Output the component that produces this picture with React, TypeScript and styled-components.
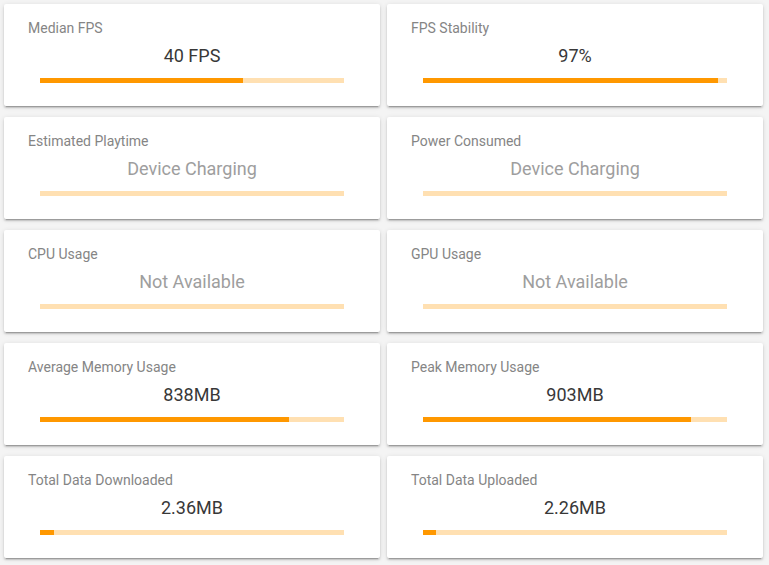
import React from 'react';
import styled, { createGlobalStyle } from 'styled-components';

const GlobalStyle = createGlobalStyle`
  body {
    margin: 0;
    background: #f4f4f4;
    font-family: Roboto, "Liberation Sans", sans-serif;
  }
`;

const Grid = styled.div`
  display: grid;
  grid-template-columns: 1fr 1fr;
  gap: 11px 7px;
  padding: 4px 6px 7px 4px;
`;

const Card = styled.div`
  height: 102px;
  box-sizing: border-box;
  background: #fff;
  border-radius: 2px;
  padding: 14px 24px 0 24px;
  box-shadow: 0 3px 1px -2px rgba(0, 0, 0, 0.2), 0 2px 2px 0 rgba(0, 0, 0, 0.14),
    0 1px 5px 0 rgba(0, 0, 0, 0.12);
`;

const Title = styled.div`
  font-size: 14px;
  line-height: 20px;
  color: #858585;
`;

const Body = styled.div`
  padding: 0 12px;
  margin-top: 6px;
`;

const Value = styled.div<{ $muted?: boolean }>`
  text-align: center;
  font-size: 18px;
  line-height: 24px;
  color: ${(p) => (p.$muted ? '#9e9e9e' : '#383838')};
`;

const Track = styled.div`
  margin-top: 10px;
  height: 5px;
  background: #ffe0b2;
  overflow: hidden;
`;

const Fill = styled.div`
  height: 100%;
  background: #ff9800;
`;

type Stat = { title: string; value: string; ratio?: number };

const stats: Stat[] = [
  { title: 'Median FPS', value: '40 FPS', ratio: 40 / 60 },
  { title: 'FPS Stability', value: '97%', ratio: 0.97 },
  { title: 'Estimated Playtime', value: 'Device Charging' },
  { title: 'Power Consumed', value: 'Device Charging' },
  { title: 'CPU Usage', value: 'Not Available' },
  { title: 'GPU Usage', value: 'Not Available' },
  { title: 'Average Memory Usage', value: '838MB', ratio: 838 / 1024 },
  { title: 'Peak Memory Usage', value: '903MB', ratio: 903 / 1024 },
  { title: 'Total Data Downloaded', value: '2.36MB', ratio: 0.046 },
  { title: 'Total Data Uploaded', value: '2.26MB', ratio: 0.043 },
];

function StatCard({ title, value, ratio }: Stat) {
  const muted = ratio === undefined;
  return (
    <Card>
      <Title>{title}</Title>
      <Body>
        <Value $muted={muted}>{value}</Value>
        <Track>
          {!muted && <Fill style={{ width: `${ratio! * 100}%` }} />}
        </Track>
      </Body>
    </Card>
  );
}

export default function App() {
  return (
    <>
      <GlobalStyle />
      <Grid>
        {stats.map((s) => (
          <StatCard key={s.title} {...s} />
        ))}
      </Grid>
    </>
  );
}
